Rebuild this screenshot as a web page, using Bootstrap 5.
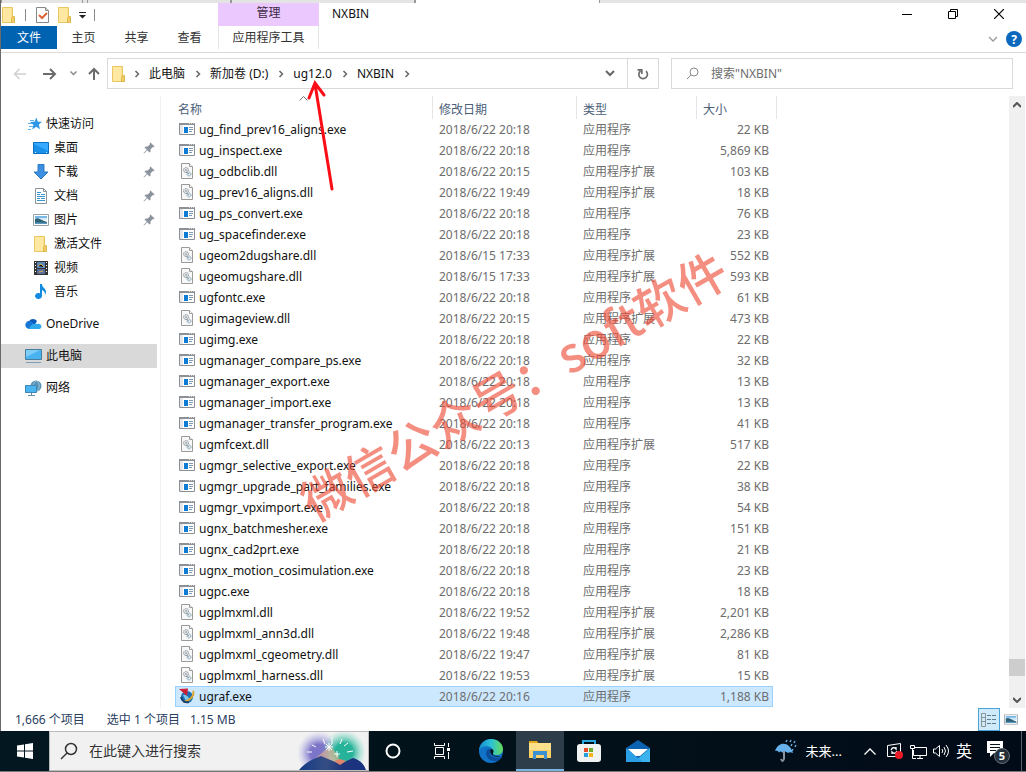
<!DOCTYPE html>
<html lang="zh-CN">
<head>
<meta charset="utf-8">
<meta name="viewport" content="width=device-width, initial-scale=1">
<title>NXBIN</title>
<link rel="stylesheet" href="https://cdn.jsdelivr.net/npm/bootstrap@5.3.0/dist/css/bootstrap.min.css">
<style>
body{font:12px/20px "Noto Sans","Noto Sans CJK SC",sans-serif;color:#111;background:#fff}
svg{display:block;flex:none}
button{background:none;border:0;padding:0;color:inherit;font:inherit}
a{color:inherit;text-decoration:none}
.explorer{border-left:1px solid #6a6a6a}
.behind{height:3px;background:#e4e4e4}
.behind span{border-left:1px solid #999;border-right:1px solid #999;height:3px}
.titlebar{height:23px}
.quickbar{width:217px}
.quickbar .mark-check{margin:0 7px 0 10px}
.quickbar .more{margin-left:6px}
.sep{width:1px;height:12px;background:#8a8a8a}
.manage{width:101px;background:#ebc8fd;color:#3b2a44}
.wintitle{font:inherit;margin:1px 0 0 13px}
.capbtn{width:46px;height:22px;display:flex;align-items:center;justify-content:center}
.ribbon{height:27px;border-bottom:1px solid #dadbdc}
.ribbon a{height:23px;line-height:23px;text-align:center;width:53px;color:#333}
.ribbon .filetab{background:#0063b1;color:#fff;width:56px}
.ribbon .tooltab{width:101px;border:1px solid #e4e4e4;border-width:0 1px;margin-left:2px}
.addressrow{padding:5px 13px 7px 0}
.navbtns{width:106px;padding-left:12px;color:#6b6b6b}
.navbtns .recent{margin-left:13px}
.navbtns .up{margin-left:11px}
.addressbox{border:1px solid #d9d9d9;height:31px;flex:546 1 0;min-width:0}
.crumb{margin:0 10px 0 9px}
.refreshbtn{width:31px;height:29px;border-left:1px solid #d9d9d9}
.searchbox{border:1px solid #d9d9d9;height:31px;flex:326 1 0;min-width:0;margin-left:12px;padding-left:14px}
.searchbox input,.tasksearch input{border:0;background:none;outline:0;padding:0;min-width:0;font:inherit}
.searchbox input::placeholder{color:#6d6d6d;opacity:1}
.sidebar{width:160px;border-right:1px solid #f1f1f1;padding:16px 3px 0 0}
.sidebar a{display:flex;align-items:center;height:24px;padding-left:24px;gap:4px}
.sidebar a.sub{padding-left:32px;gap:5px}
.sidebar a.on{background:#d9d9d9}
.sidebar .pin{margin-left:auto;margin-right:2px}
.filepane{padding-left:14px}
.files{border-collapse:separate;border-spacing:0;table-layout:fixed;width:602px}
.files th{font-weight:400;color:#4c607a;height:23px;padding:4px 6px 0 6px;border-right:1px solid #e5e5e5;line-height:18px}
.files th:first-child{padding-left:3px}
.files td{height:21px;line-height:21px;padding:0 6px;color:#6d6d6d;white-space:nowrap}
.files td:first-child{padding-left:4px;color:#111}
.files td:last-child{text-align:right;padding-right:4px;border-right:4px solid transparent;background-clip:padding-box}
.files td svg{display:inline-block;vertical-align:-3px;margin-right:4px}
.files .sel td{background-color:#cce8ff;box-shadow:inset 0 1px #99d1ff,inset 0 -1px #99d1ff}
.files .sel td:first-child{box-shadow:inset 0 1px #99d1ff,inset 0 -1px #99d1ff,inset 1px 0 #99d1ff}
.files .sel td:last-child{box-shadow:inset 0 1px #99d1ff,inset 0 -1px #99d1ff,inset -1px 0 #99d1ff}
.sorter{position:absolute;left:138px;top:0}
.scroller{width:17px;background:#f0f0f0;border-right:1px solid #fafafa}
.scroller .thumb{height:17px;background:#cdcdcd;margin-bottom:15px}
.scroller svg{margin:6px auto 5px 4px}
.statusbar{color:#29405f;height:23px;padding-left:14px}
.statusbar .chosen{margin-left:22px}
.statusbar .total{margin-left:10px}
.viewon{border:1px solid #4aa3d6;background:#cfeafa;width:22px;height:23px}
.taskbar{height:41px;background:linear-gradient(90deg,#021720,#021019 60%,#010b18);border-bottom:1px solid #777;color:#fff}
.startbtn{width:49px}
.tasksearch{width:320px;background:#f1f1f1;border:1px solid #bbb;padding-left:10px;overflow:hidden}
.tasksearch input{font-size:14px;margin-left:11px}
.tasksearch input::placeholder{color:#333;opacity:1}
.appbtn{width:48px;margin-right:1px;display:flex;align-items:center;justify-content:center}
.appbtn.active{background:#2d3d49;border-bottom:2px solid #79b5e3}
.tray{gap:6px;margin-right:3px}
.weather{font-size:13px}
.ime{font-size:16px}
.desktopedge{border-left:1px solid #56606a;width:5px}
.stamp{position:absolute;left:513px;top:384px;font:500 49px/60px "Noto Sans CJK SC",sans-serif;color:rgba(238,72,52,.62);white-space:nowrap;transform:translate(-50%,-50%) rotate(-30deg);pointer-events:none}
.pointer{position:absolute;left:304px;top:78px;pointer-events:none}
</style>
</head>
<body class="position-relative">
<svg width="0" height="0" class="position-absolute" aria-hidden="true">
<symbol id="exe" viewBox="0 0 16 16"><path fill="#fff" stroke="#8b9096" d="M.5 2.500h15v11H.5z"/><path fill="#8b9096" d="M0 2h16v2H0z"/><path fill="#d8d8d8" d="M10 2h1v1h-1zm2 0h1v1h-1zm2 0h1v1h-1z"/><path fill="#e5e7e9" d="M1 4h3v9H1z"/><path fill="#0c7cd5" d="M5 6h4v6H5z"/><path stroke="#7f9ab0" d="M10 6.500h4m-4 2h4m-4 2h3"/></symbol>
<symbol id="dll" viewBox="0 0 16 16"><path fill="#f8f8f8" stroke="#9a9a9a" d="M2.500.5h8l3 3v12h-11z"/><path fill="#fff" stroke="#9a9a9a" d="M10.500.5v3h3"/><circle cx="7" cy="7" r="2.500" fill="#dfe3e6" stroke="#8e979d" stroke-dasharray="1.500 .6"/><circle cx="7" cy="7" r=".8" fill="#7e878d"/><circle cx="10" cy="11" r="2" fill="#dceaf2" stroke="#87a4b5" stroke-dasharray="1.500 .6"/><path d="m7 9 3 2" stroke="#8e979d"/></symbol>
<symbol id="folder" viewBox="0 0 16 16"><path fill="#fbe08b" stroke="#e9c65f" d="M1.500.5h10v15h-10z"/><path fill="#ffe9a2" d="M2 1h8v14H2z"/><path fill="#f1cd63" stroke="#dcb84f" d="M11.500 9.500h2v6h-3v-4z"/></symbol>
<symbol id="chev" viewBox="0 0 6 8"><path fill="none" stroke="#666" stroke-width="1.500" d="m1.500 1 3 3-3 3"/></symbol>
<symbol id="pin" viewBox="0 0 12 12"><path fill="#8b949c" d="m7.500.5 4 4-1 .8-1-.1-2 2.200.1 2L6.500 10.500 4.300 8.200 1 11.500.5 11l3.300-3.300L1.500 5.500l1.100-1.100 2 .1 2.200-2-.1-1z"/></symbol>
<symbol id="pic" viewBox="0 0 16 12"><path fill="#fff" stroke="#98a0a7" d="M.5.5h15v11H.5z"/><path fill="#77b8ea" d="M2 2h12v4H2z"/><path fill="#d5ebf7" d="M2 4h12v2H2z"/><path fill="#2e6076" d="M2 5c3-2 5 1 12 3v2H2z"/><path fill="#5897bd" d="M2 8.500h12V10H2z"/></symbol>
</svg>
<div class="d-flex flex-column min-vh-100">
<main class="explorer flex-grow-1 d-flex flex-column">
<div class="behind d-flex" aria-hidden="true"><span style="width:8%"></span><span class="ms-1" style="width:14%"></span><span style="width:18%"></span><span class="bg-white" style="width:18%"></span></div>
<header>
<div class="titlebar d-flex">
<div class="quickbar d-flex align-items-center">
<svg width="16" height="16"><use href="#folder"/></svg><span class="sep ms-2"></span>
<button type="button" aria-label="属性" class="mark-check"><svg width="14" height="16" viewBox="0 0 14 16"><path fill="#fff" stroke="#888" d="M.5.5h9l3 3v12H.5z"/><path fill="#ddd" stroke="#888" d="M9.500.5v3h3"/><path fill="none" stroke="#dd6435" stroke-width="2" d="m3 8 3 3 5-5"/></svg></button>
<button type="button" aria-label="新建文件夹"><svg width="16" height="16"><use href="#folder"/></svg></button>
<button type="button" aria-label="自定义快速访问工具栏" class="more"><svg width="7" height="8" viewBox="0 0 7 8"><path stroke="#222" d="M0 1.500h7"/><path fill="#222" d="M0 4h7L3.500 7.500z"/></svg></button><span class="sep ms-2"></span>
</div>
<div class="manage text-center">管理</div><h1 class="wintitle">NXBIN</h1>
<div class="ms-auto me-1 d-flex">
<button type="button" class="capbtn" aria-label="最小化"><svg width="10" height="10"><path stroke="#000" d="M0 5.500h10"/></svg></button>
<button type="button" class="capbtn" aria-label="还原"><svg width="10" height="10" fill="none" stroke="#000"><path d="M.5 2.500h7v7h-7zM2.500 2.500v-2h7v7h-2"/></svg></button>
<button type="button" class="capbtn" aria-label="关闭"><svg width="10" height="10"><path stroke="#000" stroke-width="1.200" d="m0 0 10 10M10 0 0 10"/></svg></button>
</div></div>
<nav class="ribbon d-flex"><a href="#" class="filetab">文件</a><a href="#">主页</a><a href="#">共享</a><a href="#">查看</a><a href="#" class="tooltab">应用程序工具</a>
<div class="ms-auto d-flex align-items-center gap-2 pe-1"><button type="button" aria-label="展开功能区"><svg width="10" height="6"><path fill="none" stroke="#999" stroke-width="1.300" d="m1 1 4 4 4-4"/></svg></button><button type="button" aria-label="帮助"><svg width="16" height="16"><circle cx="8" cy="8" r="8" fill="#0b68bd"/><text x="8" y="12.500" fill="#fff" font-size="12" font-weight="700" text-anchor="middle">?</text></svg></button></div></nav>
<div class="addressrow d-flex">
<div class="navbtns d-flex align-items-center">
<button type="button" aria-label="后退"><svg width="14" height="12" fill="none" stroke="#cfcfcf" stroke-width="1.500"><path d="M13 6H1.500M6.500 1l-5 5 5 5"/></svg></button>
<button type="button" aria-label="前进" class="ms-3"><svg width="14" height="12" fill="none" stroke="#6b6b6b" stroke-width="2"><path d="M0 6h12M7 1l5 5-5 5"/></svg></button>
<button type="button" aria-label="最近浏览的位置" class="recent"><svg width="7" height="5" fill="none" stroke="#888" stroke-width="1.500"><path d="m.5.5 3 3 3-3"/></svg></button>
<button type="button" aria-label="向上" class="up"><svg width="12" height="13" fill="none" stroke="#6b6b6b" stroke-width="2"><path d="M6 13V2M1 7l5-5 5 5"/></svg></button>
</div>
<div class="addressbox d-flex align-items-center ps-1">
<svg width="14" height="16" viewBox="1 0 14 16"><use href="#folder" width="16" height="16"/></svg>
<svg class="ms-2" width="6" height="8"><use href="#chev"/></svg><a href="#" class="crumb">此电脑</a>
<svg width="6" height="8"><use href="#chev"/></svg><a href="#" class="crumb">新加卷 (D:)</a>
<svg width="6" height="8"><use href="#chev"/></svg><a href="#" class="crumb">ug12.0</a>
<svg width="6" height="8"><use href="#chev"/></svg><a href="#" class="crumb">NXBIN</a>
<svg width="6" height="8"><use href="#chev"/></svg>
<button type="button" class="ms-auto me-2 pe-1" aria-label="以前的位置"><svg width="10" height="7" fill="none" stroke="#666" stroke-width="2"><path d="m1 1 4 4 4-4"/></svg></button>
<button type="button" class="refreshbtn" aria-label="刷新"><svg class="mx-auto" width="12" height="12" fill="none" stroke="#6d6d6d" stroke-width="1.700"><path d="M9 3.200A4.300 4.300 0 1 1 3.500 3M.5 1.800h4.300v4.200"/></svg></button></div>
<label class="searchbox d-flex align-items-center"><svg class="me-2" width="13" height="13" fill="none" stroke="#888"><circle cx="8" cy="5" r="4"/><path d="M5 8 1 12"/></svg><input class="ms-1 flex-grow-1" type="search" aria-label="搜索" placeholder='搜索"NXBIN"'></label>
</div></header>
<div class="d-flex flex-grow-1">
<nav class="sidebar flex-shrink-0">
<a href="#"><svg width="17" height="14" viewBox="-3 0 17 14"><path fill="#2f96e6" d="m8.500.5 1.300 4.300H14l-3.200 2.700 1.200 4.800-3.800-2.500-4 2.700L5.500 8 2 5l4.500-.2z"/><path stroke="#5fb0ee" d="M2 3.500h4M0 6.500h4M1 9.500h4M0 12.500h3"/></svg>快速访问</a>
<a href="#" class="sub"><svg width="16" height="16"><path fill="#1990ea" stroke="#0d6fc0" d="M.5 2.500h15v11H.5z"/><path fill="#35aaff" d="M1 3h14v8L1 4z"/><path stroke="#cfeaff" d="M2 12.500h1m10 0h1"/></svg>桌面<svg class="pin" width="12" height="12"><use href="#pin"/></svg></a>
<a href="#" class="sub"><svg width="16" height="16"><path fill="#3d8fe0" stroke="#2a78c5" d="M5 .5h6V8h4l-7 7-7-7h4z"/></svg>下载<svg class="pin" width="12" height="12"><use href="#pin"/></svg></a>
<a href="#" class="sub"><svg width="16" height="16"><path fill="#fff" stroke="#8a939a" d="M2.500.5h8l3 3v12h-11z"/><path fill="none" stroke="#8a939a" d="M10.500.5v3h3"/><path stroke="#3b93cf" d="M4 4.500h4M4 6.500h3m1 0h4M4 8.500h8M4 10.500h3m1 0h4M4 12.500h8"/></svg>文档<svg class="pin" width="12" height="12"><use href="#pin"/></svg></a>
<a href="#" class="sub"><svg width="16" height="12"><use href="#pic"/></svg>图片<svg class="pin" width="12" height="12"><use href="#pin"/></svg></a>
<a href="#" class="sub"><svg width="16" height="16"><use href="#folder"/></svg>激活文件</a>
<a href="#" class="sub"><svg width="16" height="16"><path fill="#333" d="M1 1h14v14H1z"/><path fill="#5b87b9" d="M4 2h8v6H4z"/><path fill="#5a6f9c" d="M4 9h8v5H4z"/><path stroke="#d8b14d" d="m5 6 3-2 3 3M6 12l4-1"/><path stroke="#fff" stroke-dasharray="1 2" d="M2.500 2v12m11-12v12"/></svg>视频</a>
<a href="#" class="sub"><svg width="16" height="16"><path fill="#128be0" d="M7 0h2c0 4 4 4 4 8 0 1-.5 2-1 3 0-3-1-4-3-5v6a3.500 3 0 1 1-2-2.700z"/></svg>音乐</a>
<a href="#" class="mt-2"><svg width="17" height="16" viewBox="0 0 17 16"><path fill="#0c59b9" d="M3 11a3.500 3.500 0 0 1 1-6 5 5 0 0 1 8 0L8 12z"/><path fill="#1676d3" d="M4 13a4 4 0 1 1 3-7l6 6z"/><path fill="#2fa8ec" d="M4 13c1-4 4-6 8-5 4-1 6 3 3 5z"/></svg>OneDrive</a>
<a href="#" class="mt-2 on"><svg width="17" height="16" viewBox="0 0 17 16"><path fill="#48b3ee" stroke="#4b7b9c" d="M.5 1.500h16v10H.5z"/><path fill="#7dcdf6" d="M1 2h14L1 9z"/><path stroke="#7c9db5" d="M1 14.500h15"/></svg>此电脑</a>
<a href="#" class="mt-2"><svg width="17" height="16" viewBox="0 0 17 16"><circle cx="11" cy="6" r="5.500" fill="#5b93b5"/><path fill="none" stroke="#a5cfe2" stroke-width=".8" d="M11 1c-4 3-4 7 0 10M12 1c3 3 3 7 0 10"/><path fill="#49b4ee" stroke="#3e86b4" d="M.5 5.500h11v7H.5z"/><path stroke="#6b8ba0" d="M3 15.500h7M6.500 13v2"/></svg>网络</a>
</nav>
<section class="filepane flex-grow-1 position-relative">
<svg class="sorter" width="9" height="5"><path fill="none" stroke="#777" d="m.5 4.500 4-4 4 4"/></svg>
<table class="files">
<colgroup><col style="width:258px"><col style="width:144px"><col style="width:120px"><col style="width:80px"></colgroup>
<thead><tr><th scope="col">名称</th><th scope="col">修改日期</th><th scope="col">类型</th><th scope="col">大小</th></tr></thead>
<tbody>
<tr><td><svg width="16" height="16"><use href="#exe"/></svg>ug_find_prev16_aligns.exe</td><td>2018/6/22 20:18</td><td>应用程序</td><td>22 KB</td></tr>
<tr><td><svg width="16" height="16"><use href="#exe"/></svg>ug_inspect.exe</td><td>2018/6/22 20:18</td><td>应用程序</td><td>5,869 KB</td></tr>
<tr><td><svg width="16" height="16"><use href="#dll"/></svg>ug_odbclib.dll</td><td>2018/6/22 20:15</td><td>应用程序扩展</td><td>103 KB</td></tr>
<tr><td><svg width="16" height="16"><use href="#dll"/></svg>ug_prev16_aligns.dll</td><td>2018/6/22 19:49</td><td>应用程序扩展</td><td>18 KB</td></tr>
<tr><td><svg width="16" height="16"><use href="#exe"/></svg>ug_ps_convert.exe</td><td>2018/6/22 20:18</td><td>应用程序</td><td>76 KB</td></tr>
<tr><td><svg width="16" height="16"><use href="#exe"/></svg>ug_spacefinder.exe</td><td>2018/6/22 20:18</td><td>应用程序</td><td>23 KB</td></tr>
<tr><td><svg width="16" height="16"><use href="#dll"/></svg>ugeom2dugshare.dll</td><td>2018/6/15 17:33</td><td>应用程序扩展</td><td>552 KB</td></tr>
<tr><td><svg width="16" height="16"><use href="#dll"/></svg>ugeomugshare.dll</td><td>2018/6/15 17:33</td><td>应用程序扩展</td><td>593 KB</td></tr>
<tr><td><svg width="16" height="16"><use href="#exe"/></svg>ugfontc.exe</td><td>2018/6/22 20:18</td><td>应用程序</td><td>61 KB</td></tr>
<tr><td><svg width="16" height="16"><use href="#dll"/></svg>ugimageview.dll</td><td>2018/6/22 20:15</td><td>应用程序扩展</td><td>473 KB</td></tr>
<tr><td><svg width="16" height="16"><use href="#exe"/></svg>ugimg.exe</td><td>2018/6/22 20:18</td><td>应用程序</td><td>22 KB</td></tr>
<tr><td><svg width="16" height="16"><use href="#exe"/></svg>ugmanager_compare_ps.exe</td><td>2018/6/22 20:18</td><td>应用程序</td><td>32 KB</td></tr>
<tr><td><svg width="16" height="16"><use href="#exe"/></svg>ugmanager_export.exe</td><td>2018/6/22 20:18</td><td>应用程序</td><td>13 KB</td></tr>
<tr><td><svg width="16" height="16"><use href="#exe"/></svg>ugmanager_import.exe</td><td>2018/6/22 20:18</td><td>应用程序</td><td>13 KB</td></tr>
<tr><td><svg width="16" height="16"><use href="#exe"/></svg>ugmanager_transfer_program.exe</td><td>2018/6/22 20:18</td><td>应用程序</td><td>41 KB</td></tr>
<tr><td><svg width="16" height="16"><use href="#dll"/></svg>ugmfcext.dll</td><td>2018/6/22 20:13</td><td>应用程序扩展</td><td>517 KB</td></tr>
<tr><td><svg width="16" height="16"><use href="#exe"/></svg>ugmgr_selective_export.exe</td><td>2018/6/22 20:18</td><td>应用程序</td><td>22 KB</td></tr>
<tr><td><svg width="16" height="16"><use href="#exe"/></svg>ugmgr_upgrade_part_families.exe</td><td>2018/6/22 20:18</td><td>应用程序</td><td>38 KB</td></tr>
<tr><td><svg width="16" height="16"><use href="#exe"/></svg>ugmgr_vpximport.exe</td><td>2018/6/22 20:18</td><td>应用程序</td><td>54 KB</td></tr>
<tr><td><svg width="16" height="16"><use href="#exe"/></svg>ugnx_batchmesher.exe</td><td>2018/6/22 20:18</td><td>应用程序</td><td>151 KB</td></tr>
<tr><td><svg width="16" height="16"><use href="#exe"/></svg>ugnx_cad2prt.exe</td><td>2018/6/22 20:18</td><td>应用程序</td><td>21 KB</td></tr>
<tr><td><svg width="16" height="16"><use href="#exe"/></svg>ugnx_motion_cosimulation.exe</td><td>2018/6/22 20:18</td><td>应用程序</td><td>23 KB</td></tr>
<tr><td><svg width="16" height="16"><use href="#exe"/></svg>ugpc.exe</td><td>2018/6/22 20:18</td><td>应用程序</td><td>18 KB</td></tr>
<tr><td><svg width="16" height="16"><use href="#dll"/></svg>ugplmxml.dll</td><td>2018/6/22 19:52</td><td>应用程序扩展</td><td>2,201 KB</td></tr>
<tr><td><svg width="16" height="16"><use href="#dll"/></svg>ugplmxml_ann3d.dll</td><td>2018/6/22 19:48</td><td>应用程序扩展</td><td>2,286 KB</td></tr>
<tr><td><svg width="16" height="16"><use href="#dll"/></svg>ugplmxml_cgeometry.dll</td><td>2018/6/22 19:47</td><td>应用程序扩展</td><td>81 KB</td></tr>
<tr><td><svg width="16" height="16"><use href="#dll"/></svg>ugplmxml_harness.dll</td><td>2018/6/22 19:53</td><td>应用程序扩展</td><td>15 KB</td></tr>
<tr class="sel"><td><svg width="16" height="16" viewBox="0 0 16 16"><circle cx="8" cy="9" r="6" fill="#1c6fb5"/><path fill="#7cc7ef" d="M4 7c3-1 5 1 7 5l-4 1z"/><path fill="none" stroke="#dda52c" stroke-width="2" d="M14 3c2 4-3 10-10 11"/><path fill="none" stroke="#123e70" stroke-width="2" d="M2 9c1 4 4 6 8 5"/><path fill="#cf1f35" d="M0 1 9 .5 8 8z"/></svg>ugraf.exe</td><td>2018/6/22 20:16</td><td>应用程序</td><td>1,188 KB</td></tr>
</tbody></table>
</section>
<div class="scroller d-flex flex-column" aria-hidden="true"><svg width="8" height="6" fill="none" stroke="#555" stroke-width="2"><path d="m0 5 4-4 4 4"/></svg><div class="thumb mt-auto"></div><svg width="8" height="6" fill="none" stroke="#555" stroke-width="2"><path d="m0 1 4 4 4-4"/></svg></div>
</div>
<footer class="statusbar d-flex align-items-center"><span>1,666 个项目</span><span class="chosen">选中 1 个项目</span><span class="total">1.15 MB</span>
<div class="ms-auto d-flex align-items-center pe-2"><button type="button" class="viewon me-1" aria-label="详细信息"><svg class="mx-auto" width="18" height="14" fill="none" stroke="#667b8a"><path d="M1.500.5h4v13h-4zm0 4h4m-4 4h4" stroke="#8b9399"/><path d="M7 2.500h4m1 0h4M7 6.500h4m1 0h4M7 10.500h4m1 0h4"/></svg></button><button type="button" aria-label="大缩略图"><svg width="14" height="11" viewBox="0 0 16 12"><use href="#pic" width="16" height="12"/></svg></button></div></footer>
</main>
<nav class="taskbar d-flex">
<button type="button" class="startbtn" aria-label="开始"><svg class="mx-auto" width="16" height="16" fill="#fff"><path d="m0 2.500 7-1V7.500H0zm8-1.200L16 0v7.500H8zM0 8.500h7v6l-7-1zm8 0h8V16l-8-1.200z"/></svg></button>
<label class="tasksearch d-flex align-items-center"><svg width="18" height="18" fill="none" stroke="#333" stroke-width="1.500"><circle cx="11" cy="7" r="5.500"/><path d="m7 11-6 6"/></svg><input class="flex-grow-1" type="search" aria-label="任务栏搜索" placeholder="在此键入进行搜索">
<svg class="align-self-end" width="70" height="38" viewBox="0 0 70 38"><defs><radialGradient id="g1"><stop offset=".4" stop-color="#7d75c8"/><stop offset="1" stop-color="#b9b6ea" stop-opacity="0"/></radialGradient><radialGradient id="g2"><stop offset=".4" stop-color="#27b39a"/><stop offset="1" stop-color="#86ddc5" stop-opacity="0"/></radialGradient><linearGradient id="g3" x2="1"><stop stop-color="#163a86"/><stop offset=".4" stop-color="#344e84"/><stop offset=".65" stop-color="#20357c"/><stop offset="1" stop-color="#173282"/></linearGradient></defs><circle cx="21" cy="21" r="22" fill="url(#g1)"/><circle cx="46" cy="20" r="22" fill="url(#g2)"/><path fill="#e7b38a" opacity=".6" d="m18 26 14-12 9 10-1 10z"/><path stroke="#fff" d="m14 13 4 2m7-8 2 5m7-7v7m10-5-2 5m8-1-4 3m9 5-6 1M9 20h5m17-9v8m-4-4h8m-7-3 6 6m0-6-6 6m8 4h6m-3-3v6"/><path fill="url(#g3)" d="M1 38c5-6 11-10 22-14l19 8 13-6c7 2 11 6 13 12z"/><path fill="#e2846a" d="m36 29 6 4 6-4-6-2z"/></svg></label>
<button type="button" class="appbtn" aria-label="Cortana"><svg width="16" height="16"><circle cx="8" cy="8" r="6.500" fill="none" stroke="#fff" stroke-width="2"/></svg></button>
<button type="button" class="appbtn" aria-label="任务视图"><svg width="17" height="16" fill="none" stroke="#fff"><path d="M.5 0v2.500h10V0M.5 16v-2.500h10V16M1.500 4.500h8v7h-8zM14.500 0v4m0 5v7"/><path fill="#fff" stroke="none" d="M13 5h3v3h-3z"/></svg></button>
<button type="button" class="appbtn" aria-label="Edge"><svg width="24" height="24" viewBox="0 0 24 24"><defs><linearGradient id="e1" x2="1"><stop stop-color="#168bd0"/><stop offset=".5" stop-color="#2cc2d6"/><stop offset="1" stop-color="#68dc58"/></linearGradient></defs><circle cx="12" cy="12" r="12" fill="#1173c8"/><path fill="url(#e1)" d="M0 11C1 4 6 0 12 0c7 0 12 5 12 10 0 4-3 6-7 6-3 0-4-1-3-3 1-5-8-9-14-2z"/><path fill="#0c4e9c" d="M9 10c-5 5 0 13 8 12 3-.5 5-2 6-4-3 1-6 1-9 0-3-2-4-4-2-8z"/><path fill="#02131c" d="M12 10c3 0 3 3 2 4-.5 2 1 3 4 3h4c-7 3-13-3-10-7z"/></svg></button>
<button type="button" class="appbtn active" aria-label="文件资源管理器"><svg width="22" height="20" viewBox="0 0 22 20"><path fill="#e5a91a" d="M0 1h8l2 3H0z"/><path fill="#fbd168" d="M0 3h22v15H0z"/><path fill="#ffe18b" d="M0 3h22v7H0z"/><path fill="#3b91d2" d="M4 11h14v8h-3v-4H7v4H4z"/></svg></button>
<button type="button" class="appbtn" aria-label="Microsoft Store"><svg width="24" height="24" viewBox="0 0 24 24"><path fill="none" stroke="#2aa9e0" stroke-width="2" d="M6 6V2h12v4"/><rect y="5" width="24" height="18" rx="3" fill="#f1f3f3"/><path fill="#e34b2a" d="M7 9h4v4H7z"/><path fill="#6cad30" d="M12 9h4v4h-4z"/><path fill="#26a0da" d="M7 14h4v4H7z"/><path fill="#f3b51c" d="M12 14h4v4h-4z"/></svg></button>
<button type="button" class="appbtn" aria-label="邮件"><svg width="24" height="23" viewBox="0 0 24 23"><path fill="#0a62b0" d="m0 8 12-8 12 8v14H0z"/><path fill="#fff" d="M2 9h20l-8 7H9z"/><path fill="#3bb3ee" d="M24 8v14H8z"/><path fill="#2a9fe6" d="m0 8 17 14H0z"/></svg></button>
<div class="tray ms-auto d-flex align-items-center">
<a href="#" class="weather d-flex align-items-center gap-2 me-2 pe-1"><svg width="24" height="24" viewBox="0 0 24 24"><path fill="#67b2ec" d="M1 12C5 1 16 3 19 14c-2-1-4-1-5 0-2-2-4-2-5 0-2-2-3-2-4-.5-1-1.500-2-2-4-1.500z"/><path fill="none" stroke="#8993a0" stroke-width="2" d="M10 12v8q-1.500 4-3 0"/><path stroke="#66a9e2" stroke-width="1.500" d="m13 1-1 2m5-2-1 2m5-1-1 2m-2 1-1 2m5-1-1 2m-2 2-1 2"/></svg>未来...</a>
<button type="button" aria-label="显示隐藏的图标" class="ps-1"><svg width="12" height="7" fill="none" stroke="#fff" stroke-width="1.300"><path d="m.5 6.500 5.500-5.500 5.500 5.500"/></svg></button>
<button type="button" aria-label="同步" class="ms-1"><svg width="18" height="16" fill="none" stroke="#fff"><path d="M1.500 2.500 14.500.5v13l-13 0z"/><path stroke-width="1.300" d="M5 7q2-4 5-1V4M11 8q-2 4-5 1v2"/><circle cx="13" cy="12" r="4" fill="#e81b27" stroke="none"/></svg></button>
<button type="button" aria-label="网络"><svg width="17" height="15" fill="none" stroke="#fff"><path d="M5 3.500h11.500v8H3.500V6M7 14.500h6m-3-3v3M.5 1.500h4v3h-4zm2 3v10H6"/></svg></button>
<button type="button" aria-label="音量"><svg width="17" height="14" fill="none" stroke="#fff"><path d="M.5 5v4h2L6.500 12.500v-11L2.500 5zM9 5q1.500 2 0 4m2-6q3 4 0 8m2-10q5 6 0 12"/></svg></button>
<span class="ime">英</span>
<button type="button" aria-label="5 条新通知" class="ms-2"><svg width="26" height="26" viewBox="0 0 26 26"><path fill="#fff" d="M1 3h16v12H8l-4 4v-4H1z"/><path stroke="#06131f" d="M4 6.500h10M4 9.500h10M4 12.500h6"/><circle cx="16" cy="18" r="7.500" fill="#252f3a" stroke="#68717a"/><text x="16" y="22" text-anchor="middle" fill="#fff" font-size="11" font-weight="700">5</text></svg></button>
<span></span></div><span class="desktopedge"></span>
</nav></div>
<div class="stamp">微信公众号：soft软件</div>
<svg class="pointer" width="34" height="114" fill="none" stroke="#fb0d16" stroke-width="3" stroke-linecap="round"><path d="M28 111 11 6M5 20 11 5l9 12"/></svg>
<script src="https://cdn.jsdelivr.net/npm/bootstrap@5.3.0/dist/js/bootstrap.bundle.min.js"></script>
</body>
</html>
